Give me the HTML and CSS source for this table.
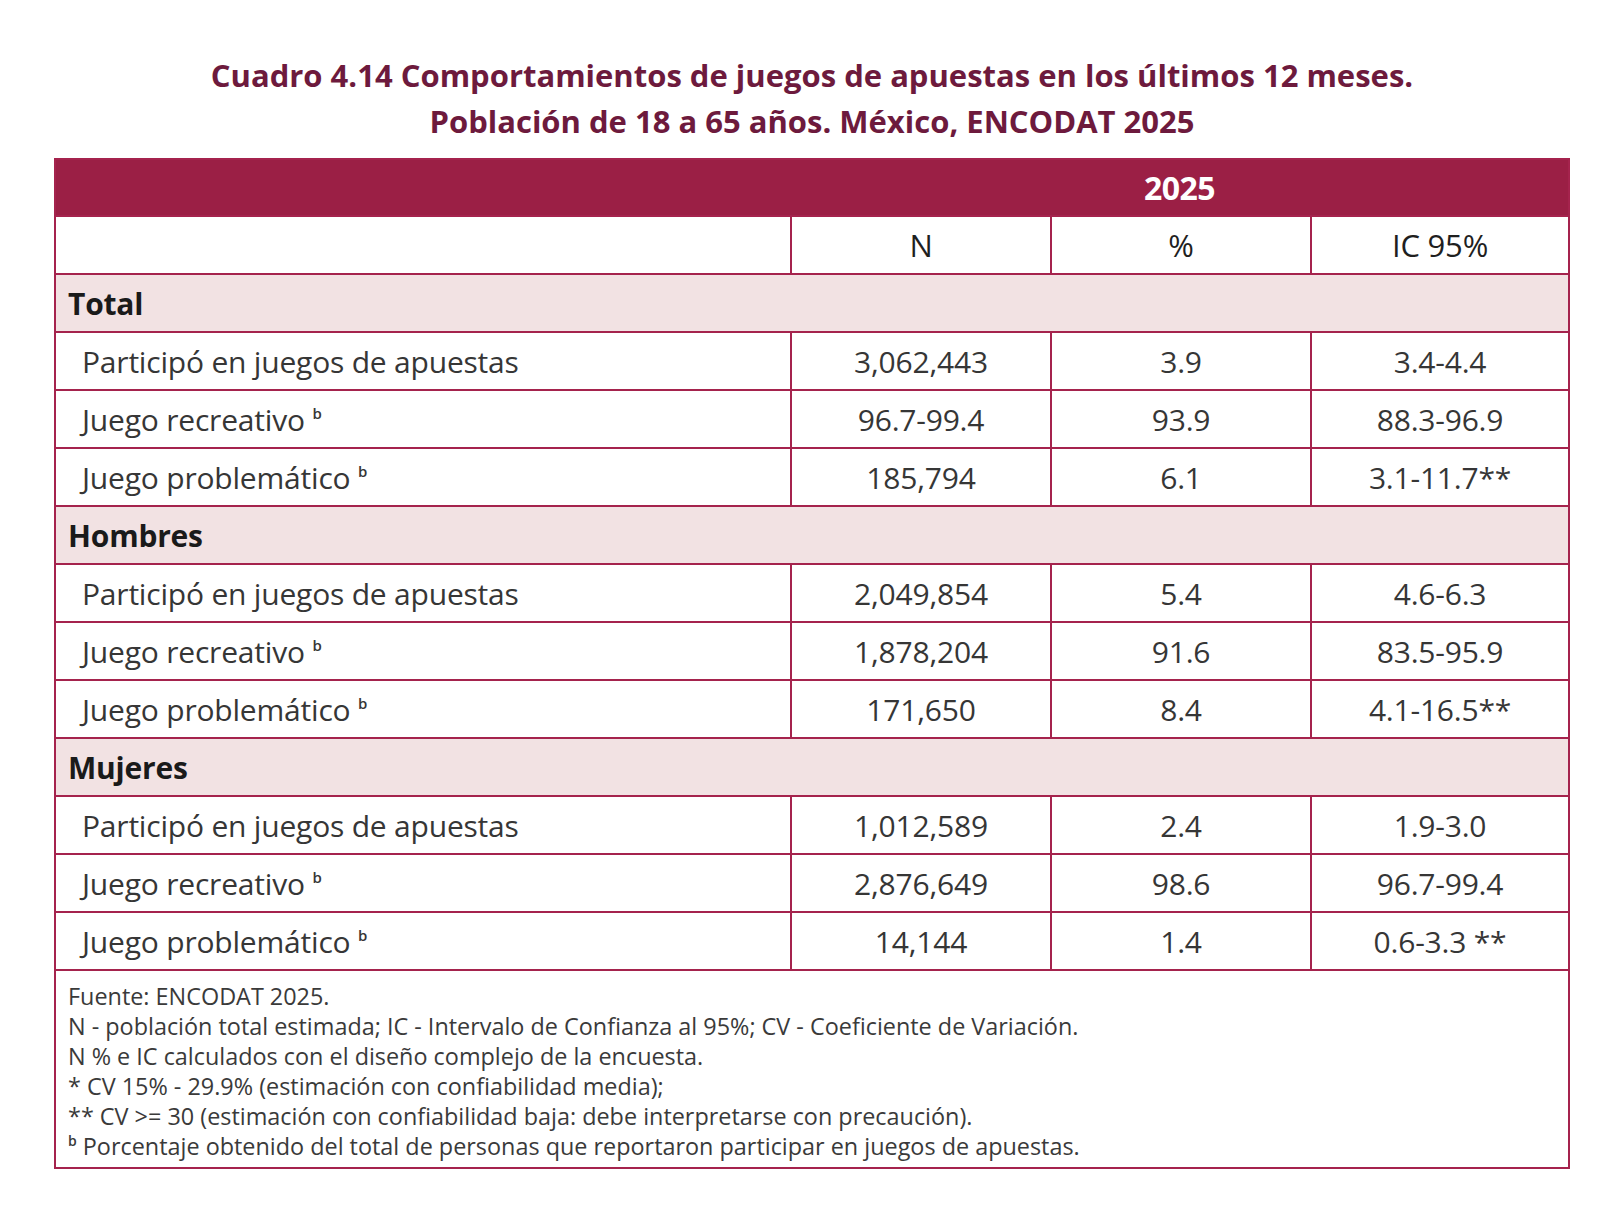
FILE: index.html
```html
<!DOCTYPE html>
<html lang="es">
<head>
    <meta charset="UTF-8">
    <title>Cuadro 4.14 ENCODAT 2025</title>
    <link rel="stylesheet" href="styles.css">
</head>
<body>
    <div class="page">
        <h2 class="table-title">
            Cuadro 4.14 Comportamientos de juegos de apuestas en los últimos 12 meses.<br>
            Población de 18 a 65 años. México, ENCODAT 2025
        </h2>

        <table class="data-table">
            <colgroup>
                <col class="col-label">
                <col class="col-num">
                <col class="col-num">
                <col class="col-ic">
            </colgroup>
            <thead>
                <tr class="year-row">
                    <th></th>
                    <th colspan="3">2025</th>
                </tr>
                <tr class="head-row">
                    <th></th>
                    <th>N</th>
                    <th>%</th>
                    <th>IC 95%</th>
                </tr>
            </thead>
            <tbody>
                <tr class="section"><td colspan="4">Total</td></tr>
                <tr>
                    <td>Participó en juegos de apuestas</td>
                    <td>3,062,443</td><td>3.9</td><td>3.4-4.4</td>
                </tr>
                <tr>
                    <td>Juego recreativo <sup>b</sup></td>
                    <td>96.7-99.4</td><td>93.9</td><td>88.3-96.9</td>
                </tr>
                <tr>
                    <td>Juego problemático <sup>b</sup></td>
                    <td>185,794</td><td>6.1</td><td>3.1-11.7**</td>
                </tr>

                <tr class="section"><td colspan="4">Hombres</td></tr>
                <tr>
                    <td>Participó en juegos de apuestas</td>
                    <td>2,049,854</td><td>5.4</td><td>4.6-6.3</td>
                </tr>
                <tr>
                    <td>Juego recreativo <sup>b</sup></td>
                    <td>1,878,204</td><td>91.6</td><td>83.5-95.9</td>
                </tr>
                <tr>
                    <td>Juego problemático <sup>b</sup></td>
                    <td>171,650</td><td>8.4</td><td>4.1-16.5**</td>
                </tr>

                <tr class="section"><td colspan="4">Mujeres</td></tr>
                <tr>
                    <td>Participó en juegos de apuestas</td>
                    <td>1,012,589</td><td>2.4</td><td>1.9-3.0</td>
                </tr>
                <tr>
                    <td>Juego recreativo <sup>b</sup></td>
                    <td>2,876,649</td><td>98.6</td><td>96.7-99.4</td>
                </tr>
                <tr>
                    <td>Juego problemático <sup>b</sup></td>
                    <td>14,144</td><td>1.4</td><td>0.6-3.3 **</td>
                </tr>
            </tbody>
            <tfoot>
                <tr>
                    <td colspan="4" class="notes">
                        Fuente: ENCODAT 2025.<br>
                        N - población total estimada; IC - Intervalo de Confianza al 95%; CV - Coeficiente de Variación.<br>
                        N % e IC calculados con el diseño complejo de la encuesta.<br>
                        * CV 15% - 29.9% (estimación con confiabilidad media);<br>
                        ** CV &gt;= 30 (estimación con confiabilidad baja: debe interpretarse con precaución).<br>
                        <sup>b</sup> Porcentaje obtenido del total de personas que reportaron participar en juegos de apuestas.
                    </td>
                </tr>
            </tfoot>
        </table>
    </div>
</body>
</html>
```

FILE: styles.css
```css
:root {
    --title-color: #6d1a3d;
    --head-bg: #9b1f45;
    --line-color: #a5234d;
    --section-bg: #f2e2e3;
    --text-color: #363636;
}

body {
    margin: 0;
    padding: 0;
    background: #ffffff;
    font-family: 'Open Sans', 'Noto Sans', sans-serif;
    color: var(--text-color);
}

.page {
    width: 1516px;
    padding: 52px 0 0 54px;
}

.table-title {
    margin: 0 0 14px;
    text-align: center;
    color: var(--title-color);
    font-size: 31px;
    font-weight: 700;
    line-height: 46px;
    letter-spacing: 0;
}

.data-table {
    width: 100%;
    border-collapse: collapse;
    table-layout: fixed;
    border: 2px solid var(--line-color);
}

.col-num {
    width: 260px;
}

.col-ic {
    width: 258px;
}

.data-table th,
.data-table td {
    border: 2px solid var(--line-color);
    height: 56px;
    padding: 0;
    text-align: center;
    font-size: 30px;
    font-weight: 400;
    letter-spacing: -0.2px;
    color: var(--text-color);
}

.data-table .year-row th {
    height: 55px;
    background: var(--head-bg);
    color: #ffffff;
    font-weight: 700;
    font-size: 32px;
    border-left: none;
    border-right: none;
    letter-spacing: -0.5px;
}

.head-row th {
    color: #1f1f1f;
    font-size: 31px;
}

.data-table td:first-child {
    text-align: left;
    padding-left: 26px;
}

.section td {
    background: var(--section-bg);
    font-weight: 700;
    color: #1a1a1a;
}

.data-table .section td:first-child {
    padding-left: 12px;
}

sup {
    font-size: 15px;
    font-weight: 600;
    vertical-align: 12px;
    line-height: 0;
}

.data-table td.notes {
    height: auto;
    padding: 10px 0 6px 12px;
    text-align: left;
    font-size: 23.4px;
    line-height: 30px;
    letter-spacing: 0;
    color: #3a3a3a;
}

.notes sup {
    font-size: 14px;
    vertical-align: 9px;
}
```
